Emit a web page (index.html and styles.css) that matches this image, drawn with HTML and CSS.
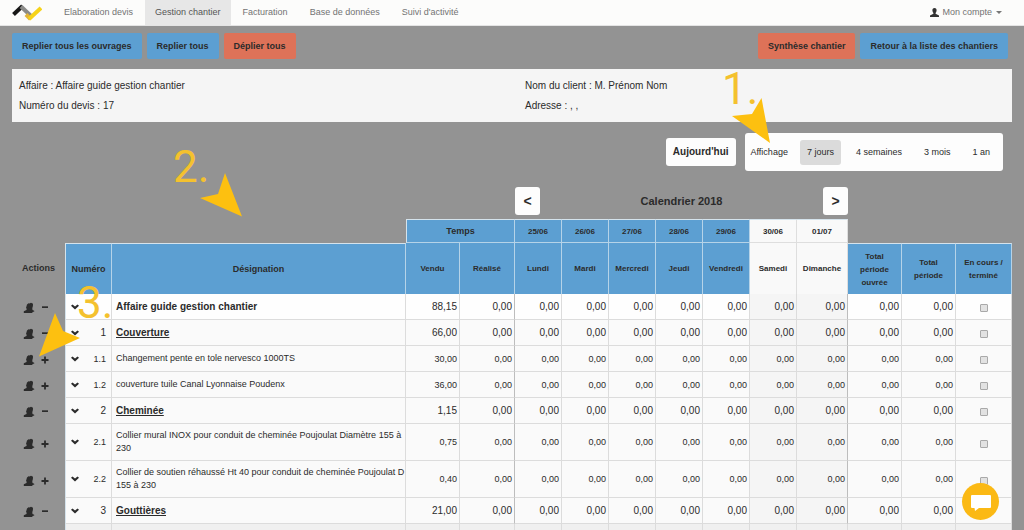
FILE: index.html
```html
<!DOCTYPE html>
<html lang="fr">
<head>
<meta charset="utf-8">
<title>Gestion chantier</title>
<link rel="stylesheet" href="styles.css">
</head>
<body>
<svg class="sprite" aria-hidden="true">
  <symbol id="people" viewBox="0 0 12 12"><path d="M4 2.500 5.500 1.200l1 .3 1.500-.8 2 1-.1 2.300-.6 2.200.2 1.800 1.700.8v1H10L9 11H.8v-1.800L3.500 8l.2-1.200-.7-.8z"/></symbol>
  <symbol id="caret" viewBox="0 0 8 6"><path d="M0 1.800 1.500.6 4 2.600 6.500.6 8 1.800 4 5.600z"/></symbol>
  <symbol id="minus" viewBox="0 0 8 8"><path d="M1 2.300h6v1.700H1z"/></symbol>
  <symbol id="plus" viewBox="0 0 8 8"><path d="M3.100.5h1.800v2.600h2.600v1.800H4.900v2.600H3.100V4.900H.5V3.100h2.600z"/></symbol>
</svg>
<header class="navbar">
  <a class="logo" href="#" aria-label="Accueil">
    <svg width="30" height="18" viewBox="0 0 30 18"><path d="M1.500 10.500 10.500 2" stroke="#171717" stroke-width="4" fill="none"/><path d="M9 2.500 19 12" stroke="#8b8b88" stroke-width="4" fill="none"/><path d="M14 10.500 18.500 15" stroke="#e2b43a" stroke-width="4" fill="none"/><path d="M17 15 29 4" stroke="#f6d319" stroke-width="4" fill="none"/></svg>
  </a>
  <nav class="menu">
    <a href="#">Elaboration devis</a>
    <a href="#" class="active">Gestion chantier</a>
    <a href="#">Facturation</a>
    <a href="#">Base de données</a>
    <a href="#">Suivi d'activité</a>
  </nav>
  <a class="account" href="#"><svg width="9" height="9" viewBox="0 0 9 9"><path d="M4.500 0C6 0 6.700 1 6.600 2.500 6.500 3.800 6 4.500 5.600 5v.8L9 7.400V9H0V7.400l3.400-1.600V5C3 4.500 2.500 3.800 2.400 2.500 2.300 1 3 0 4.500 0z" fill="#333"/></svg>Mon compte<span class="drop"></span></a>
</header>

<main class="page">
  <div class="toolbar">
    <button class="btn">Replier tous les ouvrages</button>
    <button class="btn">Replier tous</button>
    <button class="btn red">Déplier tous</button>
    <span class="spacer"></span>
    <button class="btn red">Synthèse chantier</button>
    <button class="btn">Retour à la liste des chantiers</button>
  </div>

  <section class="info">
    <div>Affaire : Affaire guide gestion chantier</div>
    <div>Nom du client : M. Prénom Nom</div>
    <div>Numéro du devis : 17</div>
    <div>Adresse : , ,</div>
  </section>

  <div class="display">
    <button class="today">Aujourd'hui</button>
    <div class="ranges">
      <span>Affichage</span>
      <button class="on">7 jours</button>
      <button>4 semaines</button>
      <button>3 mois</button>
      <button>1 an</button>
    </div>
  </div>

  <table class="plan">
    <colgroup>
      <col class="c-act"><col class="c-num"><col><col class="c-tot"><col class="c-real">
      <col class="c-day"><col class="c-day"><col class="c-day"><col class="c-day"><col class="c-day"><col class="c-day"><col class="c-sun">
      <col class="c-tot"><col class="c-tot"><col class="c-end">
    </colgroup>
    <thead>
      <tr class="cal">
        <td colspan="5"></td>
        <th colspan="7"><div class="calbar"><button aria-label="Semaine précédente">&lt;</button><span>Calendrier 2018</span><button aria-label="Semaine suivante">&gt;</button></div></th>
        <td colspan="3"></td>
      </tr>
      <tr class="dates">
        <td colspan="3"></td>
        <th colspan="2" class="blue first wide">Temps</th>
        <th class="blue">25/06</th><th class="blue">26/06</th><th class="blue">27/06</th><th class="blue">28/06</th><th class="blue">29/06</th>
        <th class="rest">30/06</th><th class="rest">01/07</th>
        <td colspan="3"></td>
      </tr>
      <tr class="heads">
        <th class="plain">Actions</th>
        <th class="blue first top wide">Numéro</th><th class="blue top wide">Désignation</th>
        <th class="blue">Vendu</th><th class="blue">Réalisé</th>
        <th class="blue">Lundi</th><th class="blue">Mardi</th><th class="blue">Mercredi</th><th class="blue">Jeudi</th><th class="blue">Vendredi</th>
        <th class="rest">Samedi</th><th class="rest">Dimanche</th>
        <th class="blue top total">Total période ouvrée</th><th class="blue top total">Total période</th><th class="blue top">En cours / terminé</th>
      </tr>
    </thead>
    <tbody id="rows"></tbody>
  </table>
</main>

<div class="note n1">1.</div>
<div class="note n2">2.</div>
<div class="note n3">3.</div>
<svg class="arrow a1" viewBox="0 0 38 45"><path d="M29.500 0 38 45 0 18l20-2z"/></svg>
<svg class="arrow a2" viewBox="0 0 42 44"><path d="M25 0 42 43.500 0 25l18-4z"/></svg>
<svg class="arrow a3" viewBox="0 0 41 44"><path d="M16 0 24 18l17 7L0 43.500z"/></svg>
<button class="chat" aria-label="Discussion"><svg width="20" height="16" viewBox="0 0 20 16"><path d="M1 0h18q1 0 1 1v11q0 1-1 1H8l-4 3-.5-3H1q-1 0-1-1V1q0-1 1-1z" fill="#fff"/></svg></button>
<script src="rows.js"></script>
</body>
</html>
```

FILE: rows.js
```js
const rows = [
  ["", "Affaire guide gestion chantier", "88,15", "root"],
  ["1", "Couverture", "66,00", "group"],
  ["1.1", "Changement pente en tole nervesco 1000TS", "30,00", "item"],
  ["1.2", "couverture tuile Canal Lyonnaise Poudenx", "36,00", "item"],
  ["2", "Cheminée", "1,15", "group"],
  ["2.1", "Collier mural INOX pour conduit de cheminée Poujoulat Diamètre 155 à 230", "0,75", "item long"],
  ["2.2", "Collier de soutien réhaussé Ht 40 pour conduit de cheminée Poujoulat D 155 à 230", "0,40", "item long"],
  ["3", "Gouttières", "21,00", "group"]
];
const icon = (id, w, h) => `<svg class="${id}" width="${w}" height="${h}"><use href="#${id}"/></svg>`;
document.getElementById("rows").innerHTML = rows.map(([num, label, sold, kind]) => {
  const sign = kind.startsWith("item") ? "plus" : "minus";
  const cells = Array.from({ length: 10 }, (_, i) =>
    `<td class="n${i === 6 || i === 7 ? " off" : ""}${i === 0 || i === 7 ? " edge" : ""}">0,00</td>`).join("");
  return `<tr class="${kind}">
    <td class="plain"><div class="acts">${icon("people", 12, 12)}${icon(sign, 8, 8)}</div></td>
    <td class="first"><div class="num">${icon("caret", 8, 6)}<span>${num}</span></div></td>
    <td class="label">${label}</td><td class="n">${sold}</td>${cells}
    <td class="check"><input type="checkbox" aria-label="Terminé : ${label}"></td></tr>`;
}).join("") + `<tr class="next"><td class="plain"></td><td class="first"></td>${"<td></td>".repeat(13)}</tr>`;
```

FILE: styles.css
```css
* { box-sizing: border-box; }
html { height: 100%; overflow: hidden; }
body {
  margin: 0;
  height: 100%;
  overflow: hidden;
  position: relative;
  background: #939393;
  color: #2b2b2b;
  font: 10px/20px "Liberation Sans", Arial, sans-serif;
}
button { font: inherit; color: inherit; border: 0; cursor: pointer; }
.sprite { display: none; }

.navbar {
  display: flex;
  height: 26px;
  background: #fcfcfb;
  border-bottom: 1px solid #e4e4e4;
  font-size: 9px;
  line-height: 25px;
}
.navbar a { color: #737373; text-decoration: none; }
.logo { display: flex; padding: 4px 12px 0; }
.menu { display: flex; gap: 2px; }
.menu a { padding: 0 10px; }
.menu .active { background: #e7e7e7; color: #555; }
.account { display: flex; align-items: center; gap: 3px; margin-left: auto; padding-right: 22px; }
.drop { border: 3px solid transparent; border-top-color: #777; border-bottom: 0; margin-left: 1px; }

.page { padding: 7px 12px 0; }
.toolbar { display: flex; gap: 5px; padding-right: 4px; }
.spacer { flex: 1; }
.btn {
  height: 26px;
  padding: 0 10px;
  border-radius: 2px;
  background: #5c9fd2;
  font-size: 9px;
  font-weight: bold;
  white-space: nowrap;
}
.btn.red { background: #de7258; }

.info {
  display: grid;
  grid-template-columns: 1fr 1fr;
  column-gap: 26px;
  margin-top: 10px;
  padding: 7px 7px 6px;
  background: #f5f5f5;
}

.display { display: flex; justify-content: flex-end; align-items: center; gap: 9px; margin: 11px 9px 0 0; }
.today { height: 28px; padding: 0 7px; border-radius: 3px; background: #fdfdfd; font-weight: bold; }
.ranges {
  display: flex;
  align-items: center;
  gap: 8px;
  height: 38px;
  padding: 0 6px;
  border-radius: 3px;
  background: #fdfdfd;
  font-size: 9px;
}
.ranges span { margin-right: 4px; }
.ranges button { height: 25px; padding: 0 7px; border-radius: 3px; background: none; }
.ranges .on { background: #dbdbdb; }

.plan { width: 100%; table-layout: fixed; border-collapse: separate; border-spacing: 0; margin-top: 12px; }
.c-act { width: 53px; }
.c-num { width: 47px; }
.c-tot { width: 54px; }
.c-real { width: 55px; }
.c-day { width: 47px; }
.c-sun { width: 51px; }
.c-end { width: 56px; }
.plan td, .plan th { padding: 0; }
.cal { height: 36px; }
.calbar { display: flex; align-items: center; justify-content: space-between; font-size: 11px; padding-bottom: 1px; }
.calbar button { width: 25px; height: 28px; padding: 0; border-radius: 3px; background: #fdfdfd; font-size: 14px; font-weight: bold; }
.dates { height: 24px; }
.heads { height: 51px; }
.dates th, .heads th { font-size: 8px; line-height: 13px; }
.plan .wide, .heads .plain { font-size: 9px; }
.plan .total { padding: 0 8px; }
.blue { background: #5c9fd2; border-right: 1px solid #b5d3e8; }
.rest { background: #f9f9f9; border-right: 1px solid #dedede; }
.dates .blue, .dates .rest, .heads .top { border-top: 1px solid #d5e3ec; }
.dates .blue { border-bottom: 1px solid #b5d3e8; }
.dates .rest { border-bottom: 1px solid #dedede; }
.plan .first { border-left: 1px solid #d5e3ec; }

tbody tr { height: 26px; }
tbody .long { height: 37px; }
tbody td { background: #fafafa; border-right: 1px solid #dcdcdc; border-bottom: 1px solid #dcdcdc; }
.root td { background: #fefefe; }
tbody td.off { background: #f5f5f5; }
tbody td.edge { border-right-color: #bdbdbd; }
tbody td.plain { background: none; border: 0; }
.next td { background: #f0f0f0; }
.acts { display: flex; align-items: center; gap: 6px; padding: 2px 0 0 11px; }
.acts svg, .num svg { fill: #2b2b2b; flex: none; }
.num { display: flex; align-items: center; justify-content: space-between; padding: 0 5px; }
.label { line-height: 13px; }
.plan .label { padding-left: 4px; }
.n { text-align: right; }
.plan .n { padding-right: 2px; }
.item { font-size: 9px; }
.root .label, .group .label { font-weight: bold; }
.group .label { text-decoration: underline; }
.check { text-align: center; line-height: 0; }
.plan .check { padding-top: 3px; }
.check input {
  appearance: none;
  width: 8px;
  height: 8px;
  margin: 0;
  border: 1px solid #a9a9a9;
  border-radius: 1px;
  background: #e2e2e2;
  vertical-align: middle;
}

.note { position: absolute; font: 400 44px/44px Roboto, sans-serif; color: #f4c12e; }
.n1 { left: 722px; top: 67px; }
.n2 { left: 173px; top: 145px; }
.n3 { left: 77px; top: 281px; }
.arrow { position: absolute; fill: #fdc010; }
.a1 { left: 732px; top: 98px; width: 38px; height: 45px; }
.a2 { left: 200px; top: 173px; width: 42px; height: 44px; }
.a3 { left: 39px; top: 313px; width: 41px; height: 44px; }
.chat {
  position: absolute;
  right: 25px;
  bottom: 10px;
  width: 37px;
  height: 37px;
  padding: 2px 0 0;
  border-radius: 50%;
  background: #fbb914;
  display: flex;
  align-items: center;
  justify-content: center;
}
```
